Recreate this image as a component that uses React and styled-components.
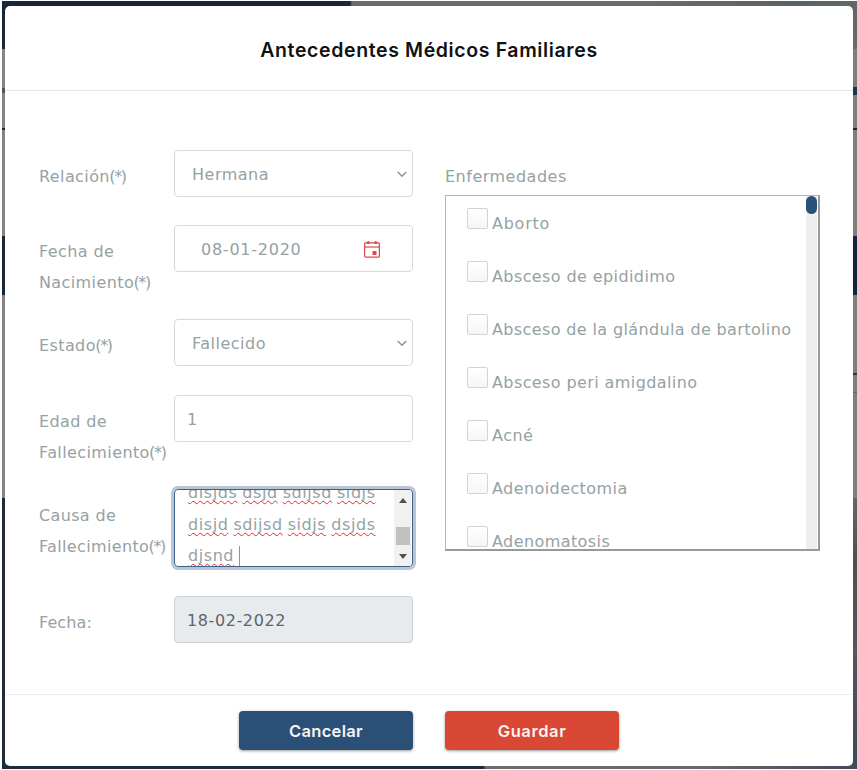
import React from "react";
import styled, { createGlobalStyle } from "styled-components";

const GlobalStyle = createGlobalStyle`
  *, *::before, *::after { box-sizing: border-box; }
  body { margin: 0; background: #fff; overflow: hidden; }
`;

const Backdrop = styled.div`
  width: 857px;
  height: 770px;
  padding: 5px 4px 3px 3px;
  border: solid #fff;
  border-width: 1px 0 1px 2px;
  font-family: "DejaVu Sans", sans-serif;
  font-size: 16px;
  color: #95a2a3;
  background:
    linear-gradient(90deg, #18263a 348px, #6b6b6a 350px, #6b6b6a 640px, #596267 800px, #62686a) 0 0 / 100% 6px no-repeat,
    linear-gradient(90deg, #1b2b3d 481px, #6d6c6d 484px, #666a6f 700px, #414a59) 0 100% / 100% 5px no-repeat,
    linear-gradient(#18263a 48px, #858383 48px 87px, #555 87px 92px, #858383 92px 127px, #1b2735 127px 129px, #858383 129px 235px, #18263a 235px 294px, #858383 294px 497px, #1b2b3d 497px) 0 0 / 50% 100% no-repeat,
    linear-gradient(#5e6568, #686b6a 48px, #7e7e7e 48px 86px, #1f3448 86px 94px, #7e7e7e 94px 127px, #1b2735 127px 129px, #7e7e7e 129px 235px, #12263c 235px 294px, #7e7e7e 294px 372px, #333 372px 374px, #7e7e7e 374px 391px, #626262 391px 392px, #7e7e7e 392px 497px, #656764 497px, #4c5150 560px, #54575b 650px, #3d4858) 100% 0 / 50% 100% no-repeat;
`;

const Modal = styled.section`
  width: 848px;
  height: 760px;
  display: flex;
  flex-direction: column;
  background: #fff;
  border-radius: 5px;
`;

const Header = styled.header`
  height: 85px;
  flex: none;
  display: flex;
  align-items: center;
  justify-content: center;
  padding: 4px 0 0 0;
  border-bottom: 1px solid #e3e6e8;
`;

const Title = styled.h1`
  margin: 0;
  font: 600 19.5px/30px Inter, sans-serif;
  letter-spacing: 0.62px;
  color: #111;
  white-space: nowrap;
`;

const Body = styled.main`
  flex: 1;
  display: grid;
  grid-template-columns: 374px 375px;
  column-gap: 32px;
  padding: 59px 0 0 34px;
`;

const Form = styled.form`
  display: grid;
  grid-template-columns: 135px 239px;
  grid-template-rows: 75px 94px 76px 94px 107px 47px;
  align-items: start;
`;

const Label = styled.label`
  padding-top: 10.5px;
  line-height: 31.5px;
  letter-spacing: ${(p) => p.$spacing ?? 0.4}px;
  white-space: pre;
`;

const Required = styled.span`
  letter-spacing: -1.3px;
  margin-left: -0.7px;
`;

const Control = styled.div`
  height: 47px;
  display: flex;
  align-items: center;
  justify-content: space-between;
  padding: 1px ${(p) => p.$right ?? 5}px 0 ${(p) => p.$left ?? 17}px;
  border: 1px solid ${(p) => (p.$disabled ? "#cdd2d6" : "#d6d9dc")};
  border-radius: 4px;
  background: ${(p) => (p.$disabled ? "#e8ebee" : "#fff")};
  color: ${(p) => (p.$disabled ? "#5d646a" : "inherit")};
  letter-spacing: ${(p) => p.$spacing ?? 0.5}px;
`;

const TextArea = styled.div`
  height: 78px;
  display: flex;
  justify-content: space-between;
  overflow: hidden;
  padding-left: 13px;
  border: 1px solid #3c628c;
  border-radius: 4px;
  box-shadow: 0 0 0 3px #b9c5d2;
`;

const Lines = styled.div`
  margin-top: -13px;
  line-height: 31.5px;
  white-space: nowrap;
`;

const Line = styled.div`
  display: flex;
  gap: 5px;
`;

const Misspelled = styled.span`
  letter-spacing: 0.57px;
  text-decoration: underline wavy #e8282e 1px;
  text-underline-offset: 2px;
  text-decoration-skip-ink: none;
`;

const Caret = styled.i`
  width: 1px;
  height: 21px;
  margin: 6px 0 0 0;
  background: #87979f;
`;

const ScrollBar = styled.div`
  width: 17px;
  margin-right: 1px;
  display: flex;
  flex-direction: column;
  align-items: center;
  background: #f1f1f1;
`;

const ScrollThumb = styled.div`
  width: 14px;
  height: 18px;
  margin: 24px 0 9px;
  background: #c1c1c1;
`;

const Arrow = styled.svg`
  width: 8px;
  height: 5px;
  flex: none;
  margin-top: ${(p) => p.$top ?? 0}px;
  fill: #505050;
`;

const Diseases = styled.section`
  display: flex;
  flex-direction: column;
`;

const DiseasesTitle = styled.h2`
  margin: 0;
  padding-top: 10.5px;
  height: 45px;
  font-size: 16px;
  font-weight: 400;
  line-height: 31.5px;
  letter-spacing: 0.5px;
`;

const ListBox = styled.div`
  height: 356px;
  display: flex;
  justify-content: space-between;
  overflow: hidden;
  border: solid #b5b5b5;
  border-width: 1px 2px 2px 1px;
  border-right-color: #999;
  border-bottom-color: #999;
`;

const List = styled.ul`
  list-style: none;
  margin: 0;
  padding: 12px 0 0 21px;
`;

const Item = styled.li`
  height: 53px;
  display: flex;
  gap: 4px;
  line-height: 31px;
  letter-spacing: ${(p) => p.$spacing}px;
  white-space: nowrap;
`;

const Box = styled.span`
  width: 21px;
  height: 21px;
  border: 1px solid #d3d3d3;
  border-radius: 2px;
  background: linear-gradient(#fff, #f6f6f6);
`;

const ListScroll = styled.div`
  width: 11px;
  margin-right: 1px;
  background: #eee;
`;

const ListThumb = styled.div`
  width: 11px;
  height: 18px;
  border-radius: 6px;
  background: #2b5179;
`;

const Footer = styled.footer`
  height: 72px;
  flex: none;
  display: flex;
  justify-content: center;
  align-items: flex-start;
  gap: 32px;
  padding-top: 16px;
  border-top: 1px solid #eceeef;
`;

const Button = styled.button`
  width: 174px;
  height: 39px;
  padding: 0;
  border: 0;
  border-radius: 4px;
  background: ${(p) => p.$color};
  color: #f8f3f5;
  box-shadow: 0 1px 3px rgba(0, 0, 0, 0.4);
  font: 600 16.5px/24px Inter, sans-serif;
  letter-spacing: ${(p) => p.$spacing}px;
`;

const Chevron = () => (
  <svg width="10" height="7" viewBox="0 0 10 7" fill="none" stroke="#8c9699" strokeWidth="1.6">
    <path d="M.8 1 5 5.2 9.2 1" />
  </svg>
);

const CalendarIcon = () => (
  <svg width="16" height="17" viewBox="0 0 16 17" fill="none" stroke="#de4950" strokeWidth="1.2">
    <rect x=".6" y="1.8" width="14.8" height="14.4" rx="1" />
    <path d="M1 6h14" />
    <path d="M2.6 1.6h3.2M10.2 1.6h3.2" strokeWidth="1.6" />
    <path d="M4.2 0v3M11.8 0v3" strokeWidth="1.4" />
    <path d="M8.5 10h4v4h-4z" fill="#de4950" stroke="none" />
  </svg>
);

const diseases = [
  ["Aborto", 0.75],
  ["Absceso de epididimo", 0.4],
  ["Absceso de la glándula de bartolino", 0.37],
  ["Absceso peri amigdalino", 0.4],
  ["Acné", 0.5],
  ["Adenoidectomia", 0.42],
  ["Adenomatosis", 0.42],
];

const causeLines = [
  ["disjds", "dsjd", "sdijsd", "sidjs"],
  ["disjd", "sdijsd", "sidjs", "dsjds"],
  ["djsnd"],
];

const Mark = () => <Required>(*)</Required>;

export default function App() {
  return (
    <>
      <GlobalStyle />
      <Backdrop>
        <Modal>
          <Header><Title>Antecedentes Médicos Familiares</Title></Header>
          <Body>
            <Form>
              <Label>Relación<Mark /></Label>
              <Control>Hermana<Chevron /></Control>
              <Label>{"Fecha de\nNacimiento"}<Mark /></Label>
              <Control $left={26} $right={32} $spacing={0.75}>08-01-2020<CalendarIcon /></Control>
              <Label>Estado<Mark /></Label>
              <Control>Fallecido<Chevron /></Control>
              <Label>{"Edad de\nFallecimiento"}<Mark /></Label>
              <Control $left={12}>1</Control>
              <Label $spacing={0.35}>{"Causa de\nFallecimiento"}<Mark /></Label>
              <TextArea>
                <Lines>
                  {causeLines.map((words, i) => (
                    <Line key={i}>
                      {words.map((w, j) => <Misspelled key={j}>{w}</Misspelled>)}
                      {i === causeLines.length - 1 && <Caret />}
                    </Line>
                  ))}
                </Lines>
                <ScrollBar>
                  <Arrow viewBox="0 0 8 5" $top={8}><path d="M0 5 4 0l4 5z" /></Arrow>
                  <ScrollThumb />
                  <Arrow viewBox="0 0 8 5"><path d="M0 0h8L4 5z" /></Arrow>
                </ScrollBar>
              </TextArea>
              <Label $spacing={0.1}>Fecha:</Label>
              <Control $disabled $left={12} $spacing={0.6}>18-02-2022</Control>
            </Form>
            <Diseases>
              <DiseasesTitle>Enfermedades</DiseasesTitle>
              <ListBox>
                <List>
                  {diseases.map(([name, spacing]) => (
                    <Item key={name} $spacing={spacing}><Box />{name}</Item>
                  ))}
                </List>
                <ListScroll><ListThumb /></ListScroll>
              </ListBox>
            </Diseases>
          </Body>
          <Footer>
            <Button type="button" $color="#2b5078" $spacing={0.3}>Cancelar</Button>
            <Button type="button" $color="#d94834" $spacing={0.6}>Guardar</Button>
          </Footer>
        </Modal>
      </Backdrop>
    </>
  );
}
